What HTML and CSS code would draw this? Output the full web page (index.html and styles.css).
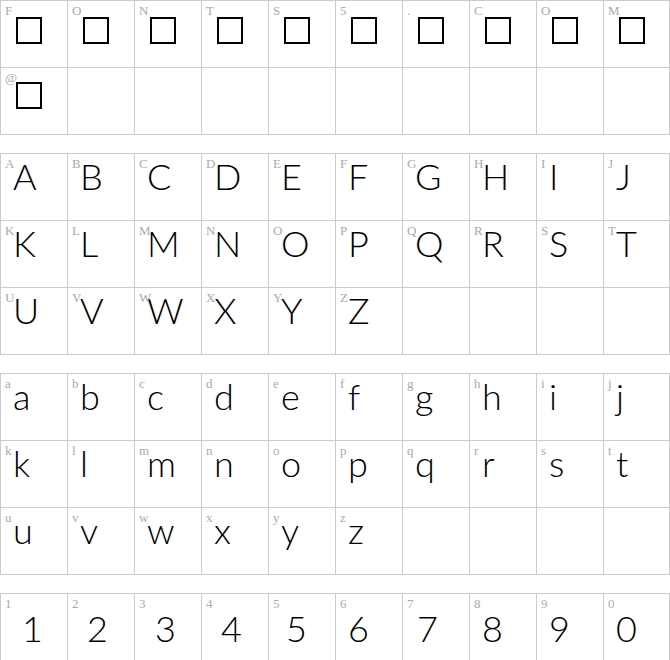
FILE: index.html
```html
<!DOCTYPE html>
<html>
<head>
<meta charset="utf-8">
<link rel="stylesheet" href="styles.css">
</head>
<body>
<div class="sheet">
  <div class="grid boxes">
    <div class="cell"><span class="lbl">F</span><span class="nd"></span></div>
    <div class="cell"><span class="lbl">O</span><span class="nd"></span></div>
    <div class="cell"><span class="lbl">N</span><span class="nd"></span></div>
    <div class="cell"><span class="lbl">T</span><span class="nd"></span></div>
    <div class="cell"><span class="lbl">S</span><span class="nd"></span></div>
    <div class="cell"><span class="lbl">5</span><span class="nd"></span></div>
    <div class="cell"><span class="lbl">.</span><span class="nd"></span></div>
    <div class="cell"><span class="lbl">C</span><span class="nd"></span></div>
    <div class="cell"><span class="lbl">O</span><span class="nd"></span></div>
    <div class="cell"><span class="lbl">M</span><span class="nd"></span></div>
    <div class="cell"><span class="lbl">@</span><span class="nd nd2"></span></div>
    <div class="cell"></div><div class="cell"></div><div class="cell"></div><div class="cell"></div>
    <div class="cell"></div><div class="cell"></div><div class="cell"></div><div class="cell"></div><div class="cell"></div>
  </div>

  <div class="grid letters">
    <div class="cell"><span class="lbl">A</span><span class="g">A</span></div>
    <div class="cell"><span class="lbl">B</span><span class="g">B</span></div>
    <div class="cell"><span class="lbl">C</span><span class="g">C</span></div>
    <div class="cell"><span class="lbl">D</span><span class="g">D</span></div>
    <div class="cell"><span class="lbl">E</span><span class="g">E</span></div>
    <div class="cell"><span class="lbl">F</span><span class="g">F</span></div>
    <div class="cell"><span class="lbl">G</span><span class="g">G</span></div>
    <div class="cell"><span class="lbl">H</span><span class="g">H</span></div>
    <div class="cell"><span class="lbl">I</span><span class="g">I</span></div>
    <div class="cell"><span class="lbl">J</span><span class="g">J</span></div>
    <div class="cell"><span class="lbl">K</span><span class="g">K</span></div>
    <div class="cell"><span class="lbl">L</span><span class="g">L</span></div>
    <div class="cell"><span class="lbl">M</span><span class="g">M</span></div>
    <div class="cell"><span class="lbl">N</span><span class="g">N</span></div>
    <div class="cell"><span class="lbl">O</span><span class="g">O</span></div>
    <div class="cell"><span class="lbl">P</span><span class="g">P</span></div>
    <div class="cell"><span class="lbl">Q</span><span class="g">Q</span></div>
    <div class="cell"><span class="lbl">R</span><span class="g">R</span></div>
    <div class="cell"><span class="lbl">S</span><span class="g">S</span></div>
    <div class="cell"><span class="lbl">T</span><span class="g">T</span></div>
    <div class="cell"><span class="lbl">U</span><span class="g">U</span></div>
    <div class="cell"><span class="lbl">V</span><span class="g">V</span></div>
    <div class="cell"><span class="lbl">W</span><span class="g">W</span></div>
    <div class="cell"><span class="lbl">X</span><span class="g">X</span></div>
    <div class="cell"><span class="lbl">Y</span><span class="g">Y</span></div>
    <div class="cell"><span class="lbl">Z</span><span class="g">Z</span></div>
    <div class="cell"></div><div class="cell"></div><div class="cell"></div><div class="cell"></div>
  </div>

  <div class="grid letters">
    <div class="cell"><span class="lbl">a</span><span class="g">a</span></div>
    <div class="cell"><span class="lbl">b</span><span class="g">b</span></div>
    <div class="cell"><span class="lbl">c</span><span class="g">c</span></div>
    <div class="cell"><span class="lbl">d</span><span class="g">d</span></div>
    <div class="cell"><span class="lbl">e</span><span class="g">e</span></div>
    <div class="cell"><span class="lbl">f</span><span class="g">f</span></div>
    <div class="cell"><span class="lbl">g</span><span class="g">g</span></div>
    <div class="cell"><span class="lbl">h</span><span class="g">h</span></div>
    <div class="cell"><span class="lbl">i</span><span class="g">i</span></div>
    <div class="cell"><span class="lbl">j</span><span class="g">j</span></div>
    <div class="cell"><span class="lbl">k</span><span class="g">k</span></div>
    <div class="cell"><span class="lbl">l</span><span class="g">l</span></div>
    <div class="cell"><span class="lbl">m</span><span class="g">m</span></div>
    <div class="cell"><span class="lbl">n</span><span class="g">n</span></div>
    <div class="cell"><span class="lbl">o</span><span class="g">o</span></div>
    <div class="cell"><span class="lbl">p</span><span class="g">p</span></div>
    <div class="cell"><span class="lbl">q</span><span class="g">q</span></div>
    <div class="cell"><span class="lbl">r</span><span class="g">r</span></div>
    <div class="cell"><span class="lbl">s</span><span class="g">s</span></div>
    <div class="cell"><span class="lbl">t</span><span class="g">t</span></div>
    <div class="cell"><span class="lbl">u</span><span class="g">u</span></div>
    <div class="cell"><span class="lbl">v</span><span class="g">v</span></div>
    <div class="cell"><span class="lbl">w</span><span class="g">w</span></div>
    <div class="cell"><span class="lbl">x</span><span class="g">x</span></div>
    <div class="cell"><span class="lbl">y</span><span class="g">y</span></div>
    <div class="cell"><span class="lbl">z</span><span class="g">z</span></div>
    <div class="cell"></div><div class="cell"></div><div class="cell"></div><div class="cell"></div>
  </div>

  <div class="grid digits">
    <div class="cell"><span class="lbl">1</span><span class="g d1">1</span></div>
    <div class="cell"><span class="lbl">2</span><span class="g d2">2</span></div>
    <div class="cell"><span class="lbl">3</span><span class="g d3">3</span></div>
    <div class="cell"><span class="lbl">4</span><span class="g d4">4</span></div>
    <div class="cell"><span class="lbl">5</span><span class="g d5">5</span></div>
    <div class="cell"><span class="lbl">6</span><span class="g">6</span></div>
    <div class="cell"><span class="lbl">7</span><span class="g d7">7</span></div>
    <div class="cell"><span class="lbl">8</span><span class="g">8</span></div>
    <div class="cell"><span class="lbl">9</span><span class="g">9</span></div>
    <div class="cell"><span class="lbl">0</span><span class="g">0</span></div>
  </div>
</div>
</body>
</html>
```

FILE: styles.css
```css
html, body {
  margin: 0;
  padding: 0;
  background: #fff;
}

.sheet {
  width: 670px;
  display: flex;
  flex-direction: column;
  gap: 18px;
}

.grid {
  display: grid;
  grid-template-columns: repeat(9, 67px) 66px;
  grid-auto-rows: 67px;
  border-left: 1px solid #cccccc;
  border-top: 1px solid #cccccc;
  box-sizing: border-box;
  width: 670px;
}

.cell {
  position: relative;
  box-sizing: border-box;
  border-right: 1px solid #cccccc;
  border-bottom: 1px solid #cccccc;
  overflow: hidden;
}

.lbl {
  position: absolute;
  left: 4px;
  top: 2px;
  font-family: "Liberation Serif", serif;
  font-size: 13px;
  line-height: 15px;
  color: #aaaaaa;
}

.nd {
  display: block;
  box-sizing: border-box;
  width: 26px;
  height: 27px;
  margin: 16px 0 0 15px;
  border: 2px solid #000;
}

.nd2 {
  margin-top: 14px;
}

.g {
  display: block;
  padding: 4px 0 0 12px;
  font-family: "Lato", "Open Sans", sans-serif;
  font-weight: 300;
  font-size: 36px;
  line-height: 36px;
  color: #000;
}

.digits .g {
  padding-top: 16px;
  padding-left: 12px;
}

.digits .d1 { padding-left: 21px; }
.digits .d2 { padding-left: 19px; }
.digits .d3 { padding-left: 20px; }
.digits .d4 { padding-left: 19px; }
.digits .d5 { padding-left: 17px; }
.digits .d7 { padding-left: 14px; }
```
